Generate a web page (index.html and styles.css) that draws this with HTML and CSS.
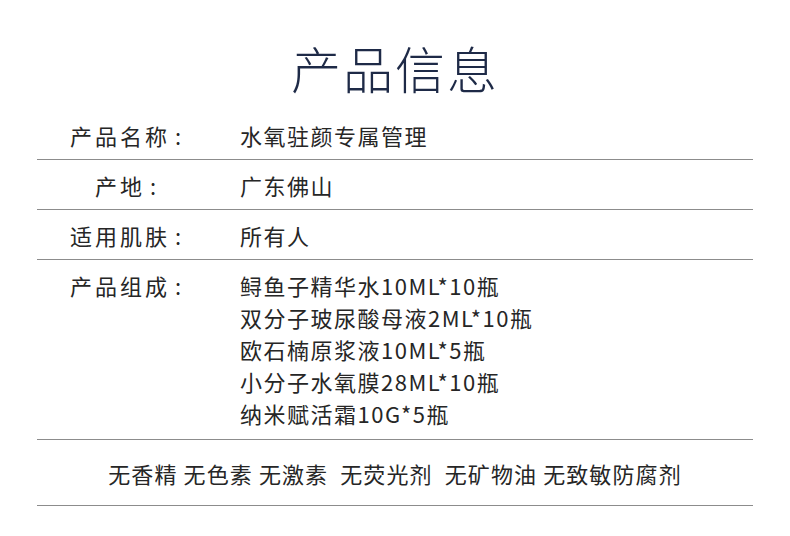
FILE: index.html
```html
<!DOCTYPE html>
<html lang="zh-CN">
<head>
<meta charset="utf-8">
<link rel="stylesheet" href="styles.css">
</head>
<body>
<div class="page">
  <h1 class="title">产品信息</h1>
  <div class="table">
    <div class="row">
      <div class="label">产品名称<span class="colon">:</span></div>
      <div class="value">水氧驻颜专属管理</div>
    </div>
    <div class="row">
      <div class="label">产地<span class="colon">:</span></div>
      <div class="value">广东佛山</div>
    </div>
    <div class="row">
      <div class="label">适用肌肤<span class="colon">:</span></div>
      <div class="value">所有人</div>
    </div>
    <div class="row row-multi">
      <div class="label">产品组成<span class="colon">:</span></div>
      <div class="value">
        <div>鲟鱼子精华水10ML*10瓶</div>
        <div>双分子玻尿酸母液2ML*10瓶</div>
        <div>欧石楠原浆液10ML*5瓶</div>
        <div>小分子水氧膜28ML*10瓶</div>
        <div>纳米赋活霜10G*5瓶</div>
      </div>
    </div>
    <div class="row footer">无香精 无色素 无激素&nbsp; 无荧光剂&nbsp; 无矿物油 无致敏防腐剂</div>
  </div>
</div>
</body>
</html>
```
FILE: styles.css
```css
html, body {
  margin: 0;
  padding: 0;
  background: #ffffff;
}
.page {
  width: 790px;
  height: 536px;
  font-family: "Noto Sans CJK SC", "Noto Sans", sans-serif;
  color: #262626;
  overflow: hidden;
}
.title {
  margin: 0;
  box-sizing: border-box;
  height: 110px;
  padding-top: 35px;
  text-align: center;
  font-size: 50px;
  line-height: 64px;
  font-weight: 300;
  color: #1e2a47;
  letter-spacing: 2px;
}
.table {
  margin: 0 37px;
}
.row {
  display: flex;
  align-items: center;
  box-sizing: border-box;
  height: 50px;
  border-bottom: 1.5px solid #8c8c8c;
  font-size: 22px;
  letter-spacing: 1.5px;
}
.label {
  width: 180px;
  text-align: center;
  flex: none;
  letter-spacing: 3px;
}
.colon {
  margin-left: 5px;
}
.value {
  margin-left: 23px;
}
.row-multi {
  height: auto;
  align-items: flex-start;
  padding: 9px 0 10px;
}
.row-multi .label,
.row-multi .value div {
  line-height: 32px;
}
.footer {
  justify-content: center;
  height: 66px;
  font-size: 22px;
  letter-spacing: 1.1px;
  white-space: pre;
}
```
